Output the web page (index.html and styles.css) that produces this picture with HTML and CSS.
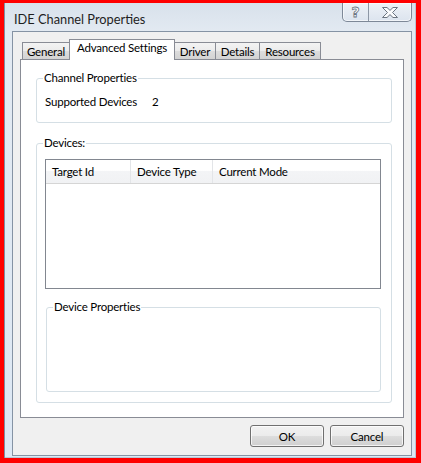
FILE: index.html
```html
<!DOCTYPE html>
<html>
<head>
<meta charset="utf-8">
<link rel="stylesheet" href="styles.css">
</head>
<body>
<div class="window">
  <div class="titlebar">
    <span class="title">IDE Channel Properties</span>
    <div class="caption-btns">
      <div class="cbtn help"><span class="q">?</span></div>
      <div class="cbtn close">
        <svg width="18" height="11" viewBox="0 0 18 11"><path d="M1.5 0.5 H6 L9 3.4 L12 0.5 H16.5 L11.5 5.5 L16.5 10.5 H12 L9 7.6 L6 10.5 H1.5 L6.5 5.5 Z" fill="#fbfcfd" stroke="#6b7480" stroke-width="1" stroke-linejoin="round"/></svg>
      </div>
    </div>
  </div>
  <div class="client">
    <div class="tabs">
      <div class="tab t-general">General</div>
      <div class="tab t-adv active">Advanced Settings</div>
      <div class="tab t-driver">Driver</div>
      <div class="tab t-details">Details</div>
      <div class="tab t-res">Resources</div>
    </div>
    <div class="page">
      <fieldset class="group g1">
        <legend>Channel Properties</legend>
        <div class="row"><span class="lbl">Supported Devices</span><span>2</span></div>
      </fieldset>
      <fieldset class="group g2">
        <legend>Devices:</legend>
        <div class="listview">
          <div class="lv-header">
            <div class="col c1">Target Id</div>
            <div class="col c2">Device Type</div>
            <div class="col c3">Current Mode</div>
          </div>
        </div>
        <fieldset class="group g3">
          <legend>Device Properties</legend>
        </fieldset>
      </fieldset>
    </div>
    <div class="buttons">
      <button class="btn">OK</button>
      <button class="btn">Cancel</button>
    </div>
  </div>
</div>
</body>
</html>
```
FILE: styles.css
```css
html, body {
  margin: 0;
  padding: 0;
}
body {
  background: #ff0000;
  width: 421px;
  height: 463px;
  overflow: hidden;
  font-family: Lato, "Open Sans", sans-serif;
  font-size: 11.5px;
  letter-spacing: -0.2px;
  color: #000;
}
.window {
  margin: 3px 5px 0 4px;
  width: 412px;
  height: 455px;
  display: flex;
  flex-direction: column;
  background: linear-gradient(to bottom, #d8e1eb 0px, #e3eaf2 30px, #dde8f4 100%);
  box-shadow: inset 1px 0 0 #7f8fa2, inset -1px 0 0 #b9c6d4, inset 0 -1px 0 #b9c6d4;
}
.titlebar {
  height: 28px;
  display: flex;
  align-items: flex-start;
  justify-content: space-between;
  padding-left: 10px;
  padding-right: 4px;
}
.title {
  margin-top: 8px;
  font-size: 12.8px;
  letter-spacing: 0;
  line-height: 16px;
  color: #1e1e1e;
}
.caption-btns {
  display: flex;
  height: 18px;
  border: 1px solid #7d8897;
  border-top: none;
  border-radius: 0 0 5px 5px;
  background: linear-gradient(to bottom, #eef2f7, #dce4ee);
  box-shadow: inset 0 0 0 1px rgba(255,255,255,0.6);
}
.cbtn {
  display: flex;
  align-items: center;
  justify-content: center;
  height: 18px;
}
.help {
  width: 25px;
  border-right: 1px solid #8d97a5;
}
.close {
  width: 42px;
}
.q {
  font-family: "DejaVu Sans", sans-serif;
  font-weight: bold;
  font-size: 14px;
  letter-spacing: 0;
  line-height: 14px;
  color: #fbfcfd;
  -webkit-text-stroke: 0.8px #6b7480;
}
.client {
  margin: 0 4px 2px 8px;
  flex: 1;
  border: 1px solid #8593a4;
  background: #f0f0f0;
  padding: 7px 7px 0 7px;
  display: flex;
  flex-direction: column;
}
.tabs {
  height: 20px;
  display: flex;
  align-items: flex-end;
  padding-left: 2px;
}
.tab {
  border: 1px solid #898c95;
  border-bottom: none;
  background: linear-gradient(to bottom, #f3f3f3 0%, #ebebeb 50%, #dddddd 51%, #d3d3d3 100%);
  text-align: center;
  line-height: 17px;
  box-sizing: border-box;
  height: 17px;
  margin-left: -1px;
  white-space: nowrap;
}
.t-general { width: 48px; margin-left: 0; }
.t-adv { width: 106px; }
.t-driver { width: 42px; }
.t-details { width: 45px; }
.t-res { width: 62px; }
.tab.active {
  position: relative;
  z-index: 1;
  height: 21px;
  margin-bottom: -1px;
  background: #ffffff;
  line-height: 16px;
}
.page {
  height: 359px;
  box-sizing: border-box;
  border: 1px solid #898c95;
  background: #ffffff;
  display: flex;
  flex-direction: column;
}
.group {
  border: 1px solid #d5dfe5;
  border-radius: 3px;
  padding: 0 6px;
  min-width: 0;
}
.group legend {
  padding: 0 1px;
  line-height: 14px;
}
.g1 {
  margin: 11px 11px 0 15px;
  padding-bottom: 13px;
}
.row {
  margin-top: 10px;
  margin-left: 2px;
  line-height: 14px;
  display: flex;
}
.lbl {
  width: 107px;
  flex: none;
}
.g2 {
  margin: 13px 11px 0 15px;
  padding-bottom: 10px;
}
.listview {
  margin-top: 9px;
  margin-left: 2px;
  width: 336px;
  height: 130px;
  box-sizing: border-box;
  border: 1px solid #828790;
  background: #fff;
}
.lv-header {
  display: flex;
  height: 24px;
  box-sizing: border-box;
  border-bottom: 1px solid #d5d5d5;
  background: linear-gradient(to bottom, #ffffff 0%, #ffffff 45%, #f3f4f6 50%, #f1f2f4 100%);
}
.col {
  padding-left: 6px;
  line-height: 23px;
  box-sizing: border-box;
}
.c1 { width: 85px; border-right: 1px solid #e3e5e8; }
.c2 { width: 82px; border-right: 1px solid #e3e5e8; }
.c3 { flex: 1; }
.g3 {
  margin: 11px 0 0 3px;
  width: 335px;
  box-sizing: border-box;
  height: 92px;
  padding-bottom: 0;
}
.buttons {
  flex: 1;
  display: flex;
  justify-content: flex-end;
  align-items: flex-start;
  gap: 6px;
  padding-top: 7px;
}
.btn {
  width: 74px;
  height: 22px;
  margin: 0;
  padding: 0;
  font-family: Lato, "Open Sans", sans-serif;
  font-size: 11.5px;
  letter-spacing: -0.2px;
  color: #000;
  border: 1px solid #707070;
  border-radius: 3px;
  background: linear-gradient(to bottom, #f2f2f2 0%, #ebebeb 50%, #dddddd 51%, #cfcfcf 100%);
  box-shadow: inset 0 0 0 1px rgba(255,255,255,0.75);
}
```
